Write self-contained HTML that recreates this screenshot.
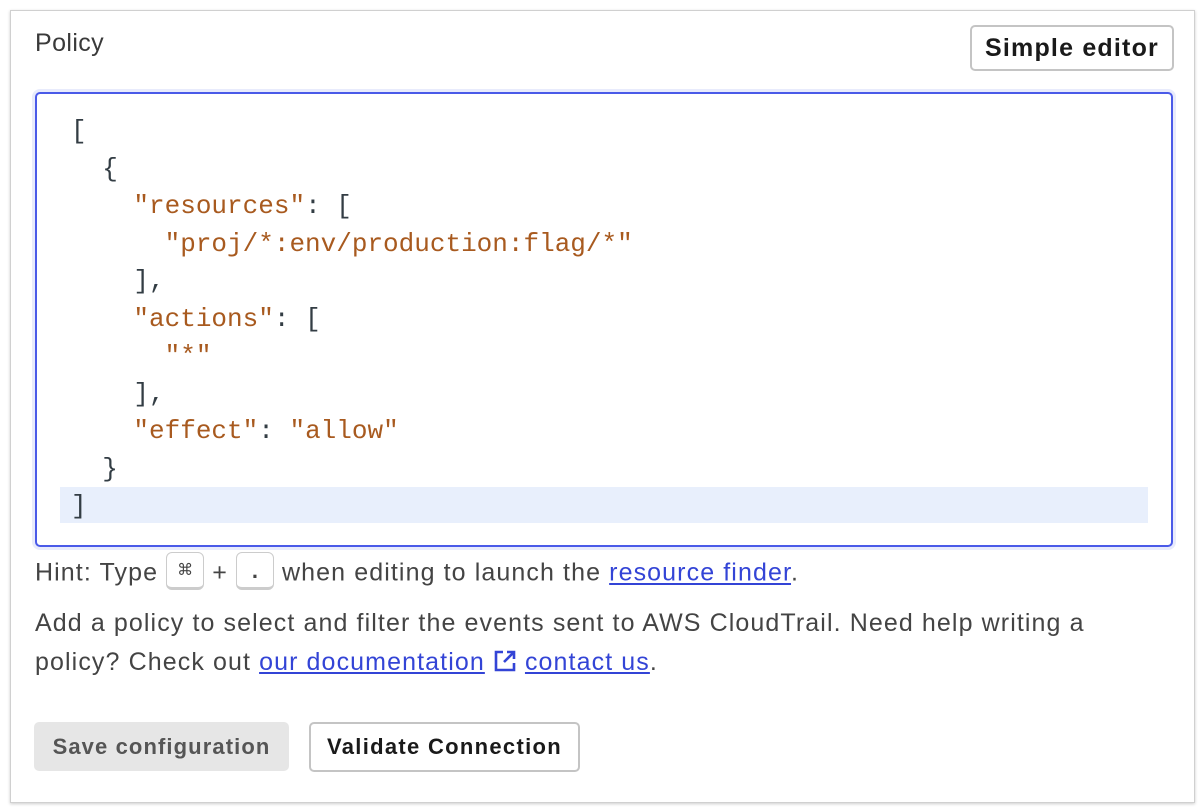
<!DOCTYPE html>
<html><head><style>
body{margin:0;width:1204px;height:812px;background:#fff;font-family:"Liberation Sans",sans-serif;position:relative;overflow:hidden}
.card{position:absolute;left:10px;top:10px;width:1183px;height:791px;border:1px solid #d0d0d0;box-shadow:0 1px 3px rgba(0,0,0,.2);background:#fff}
.abs{position:absolute}
.title{left:35px;top:29px;font-size:25px;letter-spacing:0.4px;color:#3a3a3a}
.btn{border:2px solid #c4c4c4;border-radius:5px;background:#fff;font-weight:bold;color:#1a1a1a;box-sizing:border-box;display:flex;align-items:center;justify-content:center}
.ed{left:32px;top:89px;width:1144px;height:461px;border-radius:8px;background:#e8ebfc}
.edi{left:35px;top:92px;width:1138px;height:455px;border:2px solid #4a5ae8;border-radius:5px;box-sizing:border-box;background:#fff}
.hl{left:60px;top:487px;width:1088px;height:36px;background:#e8effc}
pre{position:absolute;left:71px;top:113px;margin:0;font-family:"Liberation Mono",monospace;font-size:26px;line-height:37.5px;color:#333d44}
.s{color:#a85a1f}
.t{font-size:25px;letter-spacing:1.1px;color:#444;left:35px}
a{color:#3344d6;text-decoration:underline}
.kbd{display:inline-block;border:1px solid #ccc;border-bottom:3px solid #ccc;border-radius:6px;width:38px;height:38px;vertical-align:middle;text-align:center;line-height:36px;font-size:16px;box-sizing:border-box;margin-top:-6px;letter-spacing:0}
</style></head><body>
<div class="card"></div>
<div class="abs title">Policy</div>
<div class="abs btn" style="left:970px;top:25px;width:204px;height:46px;font-size:25px;letter-spacing:1.2px">Simple editor</div>
<div class="abs ed"></div>
<div class="abs edi"></div>
<div class="abs hl"></div>
<pre>[
  {
    <span class="s">"resources"</span>: [
      <span class="s">"proj/*:env/production:flag/*"</span>
    ],
    <span class="s">"actions"</span>: [
      <span class="s">"*"</span>
    ],
    <span class="s">"effect"</span>: <span class="s">"allow"</span>
  }
]</pre>
<div class="abs t" style="top:558px">Hint: Type <span class="kbd">⌘</span> + <span class="kbd" style="font-weight:bold;font-size:22px">.</span> when editing to launch the <a>resource finder</a>.</div>
<div class="abs t" style="top:604px;line-height:39px;width:1100px">Add a policy to select and filter the events sent to AWS CloudTrail. Need help writing a policy? Check out <a>our documentation</a> <svg width="24" height="24" viewBox="0 0 24 24" style="vertical-align:-3px" fill="none" stroke="#3344d6" stroke-width="2.6"><path d="M10 3H3v18h18v-7"/><path d="M14 3h7v7M21 3l-10 10"/></svg> <a>contact us</a>.</div>
<div class="abs" style="left:34px;top:722px;width:255px;height:49px;background:#e6e6e6;border-radius:5px;font-weight:bold;color:#555;font-size:22px;letter-spacing:1.1px;display:flex;align-items:center;justify-content:center">Save configuration</div>
<div class="abs btn" style="left:309px;top:722px;width:271px;height:50px;font-size:22px;letter-spacing:1.3px">Validate Connection</div>
</body></html>
